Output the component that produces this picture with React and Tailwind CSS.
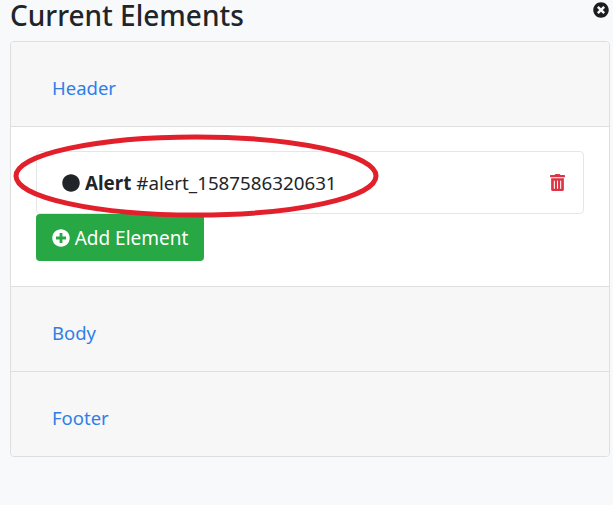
import { FaTimesCircle, FaTrashAlt, FaPlusCircle, FaCircle } from "react-icons/fa";

const Section = ({ label, last }) => (
  <div className={`${last ? "h-[84px]" : "h-[85px] border-b border-[#dfdfdf]"} bg-[#f7f7f7] pl-[41px] pt-[31px]`}>
    <a className="block text-[18.5px] leading-[30px] text-[#2f7fe6]">{label}</a>
  </div>
);

export default function App() {
  return (
    <div className="relative h-[505px] w-[613px] overflow-hidden bg-[#f8f9fa] px-[10px] text-[#212529] font-['Noto_Sans','Open_Sans',sans-serif]">
      <div className="flex h-[41px] items-start justify-between">
        <h2 className="text-[28px] leading-[30px] font-medium">Current Elements</h2>
        <FaTimesCircle className="mt-[2px] mr-[-6px] text-[16px] text-[#1b1e21]" />
      </div>
      <div className="w-[600px] overflow-hidden rounded-[4px] border border-[#dfdfdf]">
        <Section label="Header" />
        <div className="h-[160px] bg-white border-b border-[#dfdfdf] pt-[24px] pl-[25px] pr-[25px]">
          <div className="flex h-[63px] items-center justify-between rounded-[4px] border border-[#e6e6e6] bg-white pl-[25px] pr-[17px]">
            <div className="flex items-center pt-[1px] text-[18.75px]">
              <FaCircle className="mr-[5px] text-[18px] text-[#212529]" />
              <b className="mr-[5px] font-bold">Alert</b>
              <span>#alert_1587586320631</span>
            </div>
            <FaTrashAlt className="text-[17px] text-[#dc3545]" />
          </div>
          <button className="flex h-[47px] w-[168px] items-center justify-center gap-[5px] rounded-[4px] bg-[#28a745] pt-[1px] text-[19px] text-white">
            <FaPlusCircle className="text-[18px]" />
            Add Element
          </button>
        </div>
        <Section label="Body" />
        <Section label="Footer" last />
      </div>
      <svg className="absolute left-[12px] top-[134px]" width="368" height="85" viewBox="0 0 368 85" fill="none">
        <ellipse cx="184" cy="42" rx="180" ry="39" stroke="#e2202c" strokeWidth="5" />
      </svg>
    </div>
  );
}
